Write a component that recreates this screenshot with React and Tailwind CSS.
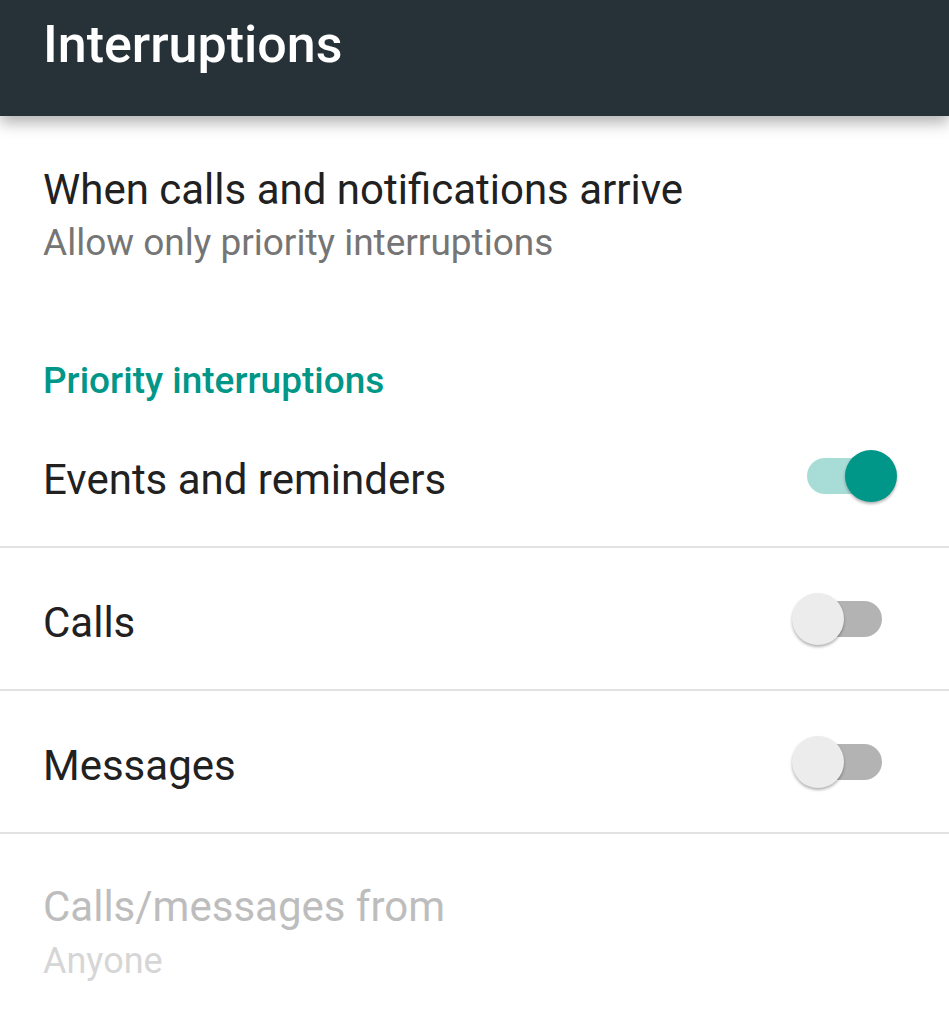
import React from "react";

function Switch({ on }) {
  return (
    <div className="relative w-[106px] h-[54px] shrink-0">
      <div
        className={
          "absolute left-[16px] top-[9px] w-[75px] h-[36px] rounded-full " +
          (on ? "bg-[#a8dcd6]" : "bg-[#b3b3b3]")
        }
      />
      <div
        className={
          "absolute top-[1px] w-[52px] h-[52px] rounded-full shadow-[0_2px_3px_rgba(0,0,0,0.3)] " +
          (on ? "left-[54px] bg-[#009688]" : "left-[1px] bg-[#ececec]")
        }
      />
    </div>
  );
}

function ToggleRow({ label, on }) {
  return (
    <div className="h-[143px] flex items-center justify-between pl-[43px] pr-[52px] border-b-2 border-[#e2e2e2]">
      <span className="mt-[7px] text-[42px] text-[#212121]">{label}</span>
      <Switch on={on} />
    </div>
  );
}

export default function App() {
  return (
    <div className="w-[949px] h-[1024px] bg-white overflow-hidden font-['Roboto',sans-serif]">
      <div className="relative z-10 h-[116px] bg-[#263238] pl-[43px] pt-[13px] shadow-[0_7px_14px_rgba(0,0,0,0.3)]">
        <h1 className="text-[52px] font-medium text-white leading-[64px]">Interruptions</h1>
      </div>
      <div className="pl-[43px] pt-[49px]">
        <div className="text-[42px] text-[#212121] leading-[50px]">When calls and notifications arrive</div>
        <div className="mt-[4px] text-[37px] text-[#757575] leading-[48px]">Allow only priority interruptions</div>
      </div>
      <div className="pl-[43px] pt-[90px]">
        <div className="text-[37px] font-medium text-[#009688] leading-[48px]">Priority interruptions</div>
      </div>
      <div>
        <ToggleRow label="Events and reminders" on={true} />
        <ToggleRow label="Calls" on={false} />
        <ToggleRow label="Messages" on={false} />
      </div>
      <div className="pl-[43px] pt-[48px]">
        <div className="text-[42px] text-[#bdbdbd] leading-[50px]">Calls/messages from</div>
        <div className="mt-[5px] text-[36px] text-[#d6d6d6] leading-[48px]">Anyone</div>
      </div>
    </div>
  );
}
